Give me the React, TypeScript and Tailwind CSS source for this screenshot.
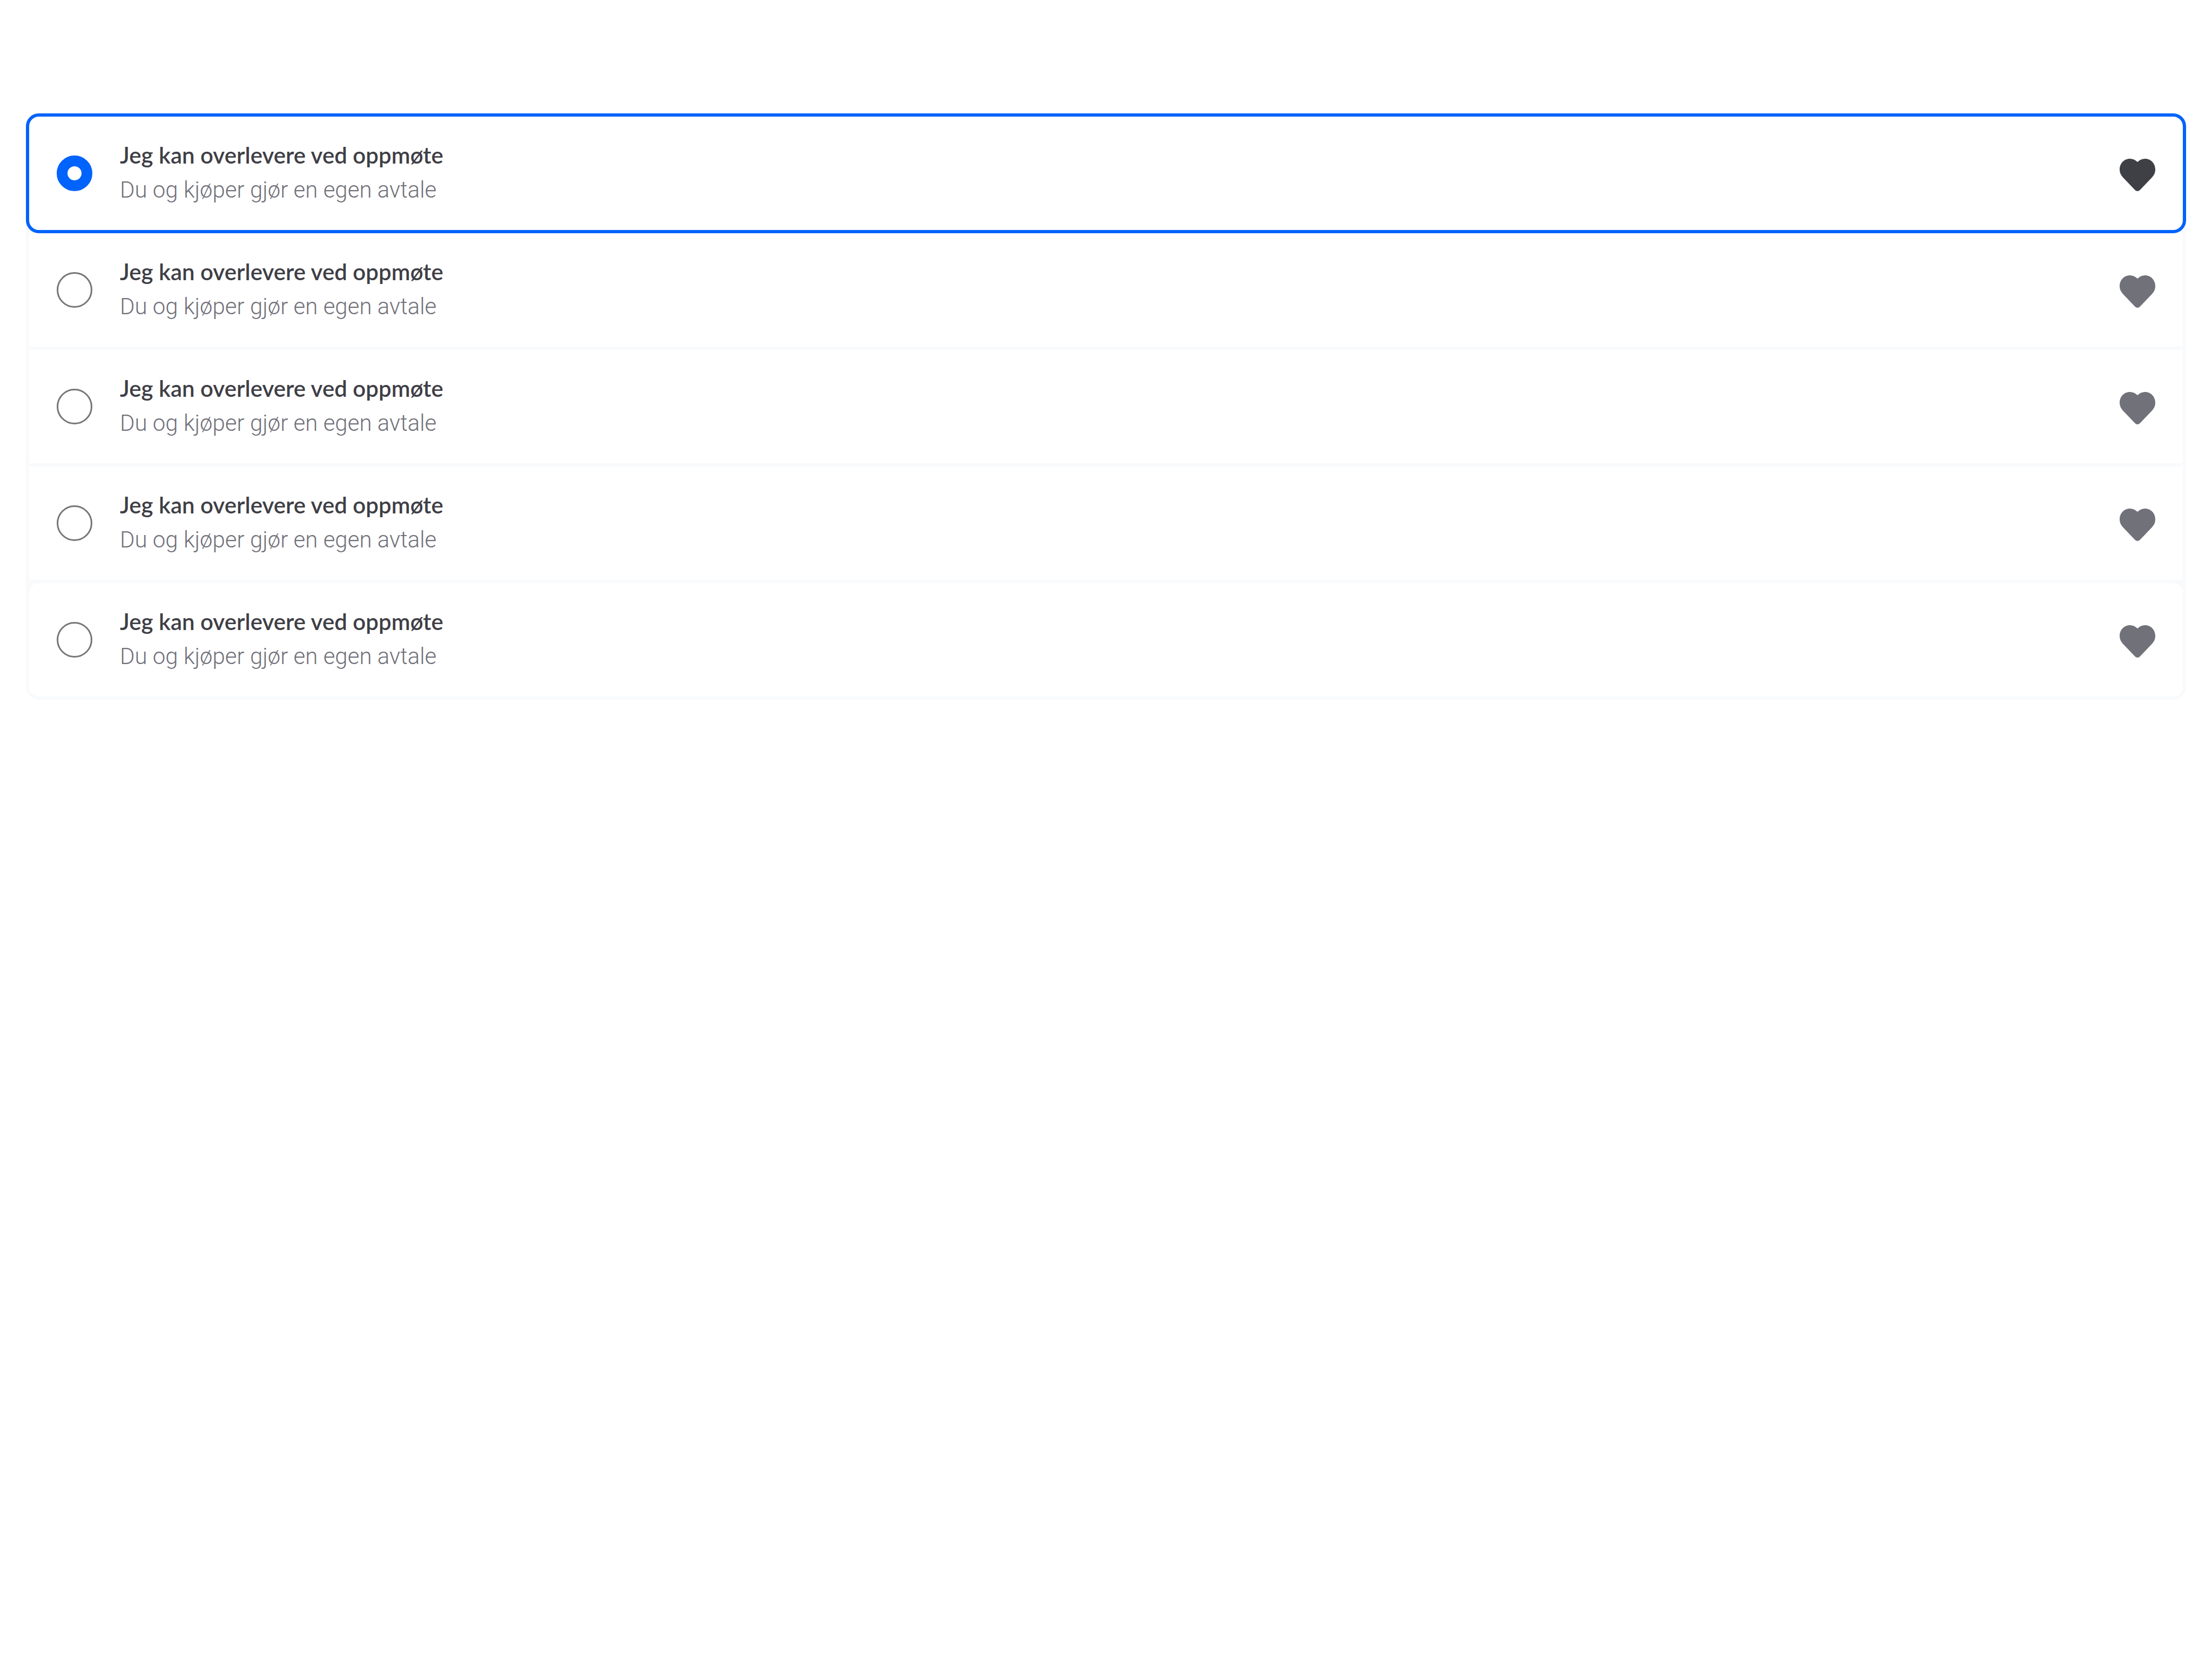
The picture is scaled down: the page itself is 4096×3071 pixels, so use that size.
import { useState } from "react";

const options = ["one", "two", "three", "four", "five"].map((id) => ({
  id,
  title: "Jeg kan overlevere ved oppmøte",
  description: "Du og kjøper gjør en egen avtale",
}));

function HeartIcon() {
  return (
    <svg viewBox="0 -6 66 66" className="size-[66px] shrink-0 fill-current" aria-hidden="true">
      <path d="M33 6C29 2 24 0 19 0C8 0 0 9 0 20C0 25.5 2 30 6 34.5L28.5 58C31 60.6 35 60.6 37.5 58L60 34.5C64 30 66 25.5 66 20C66 9 58 0 47 0C42 0 37 2 33 6Z" />
    </svg>
  );
}

export default function App() {
  const [selected, setSelected] = useState("one");

  return (
    <main className="min-h-screen bg-white px-12 py-[210px]">
      <div role="radiogroup" aria-label="Levering" className="rounded-3xl bg-slate-50">
        {options.map((option) => (
          <label
            key={option.id}
            className="relative -mt-[6px] flex cursor-pointer items-center gap-[51px] border-[6px] border-slate-50 bg-white px-[51px] pt-10 pb-[41px] text-[#71717a] first:mt-0 first:rounded-3xl last:rounded-3xl has-checked:z-10 has-checked:rounded-3xl has-checked:border-[#0063fb] has-checked:text-[#3f3f46]"
          >
            <input
              type="radio"
              name="delivery"
              value={option.id}
              checked={selected === option.id}
              onChange={() => setSelected(option.id)}
              className="size-[66px] shrink-0 cursor-pointer appearance-none rounded-full border-[3px] border-[#767676] bg-white checked:border-[20px] checked:border-[#0063fb]"
            />
            <span className="flex min-w-0 grow flex-col text-[42px]">
              <span className="font-['Lato',sans-serif] leading-[62px] font-semibold text-[#3f3f46]">{option.title}</span>
              <span className="font-['Roboto',sans-serif] leading-[67px] font-light text-[#71717a]">{option.description}</span>
            </span>
            <HeartIcon />
          </label>
        ))}
      </div>
    </main>
  );
}
